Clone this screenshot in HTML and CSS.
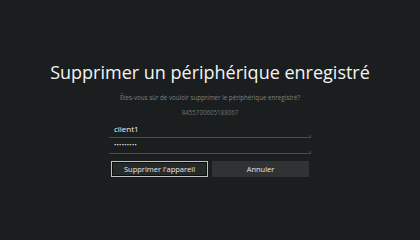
FILE: index.html
```html
<!DOCTYPE html>
<html lang="fr">
<head>
<meta charset="utf-8">
<title>Supprimer un périphérique enregistré</title>
<link rel="stylesheet" href="styles.css">
</head>
<body>
<main class="dialog">
  <h1 class="title">Supprimer un périphérique enregistré</h1>
  <p class="subtitle">Êtes-vous sûr de vouloir supprimer le périphérique enregistré?</p>
  <p class="serial">8455700605188067</p>
  <div class="form">
    <div class="field"><span class="value">client1</span></div>
    <div class="field"><span class="value dots">•••••••••</span></div>
    <div class="actions">
      <button class="btn btn-primary">Supprimer l'appareil</button>
      <button class="btn">Annuler</button>
    </div>
  </div>
</main>
</body>
</html>
```
FILE: styles.css
```css
html, body {
  margin: 0;
  padding: 0;
  background: #1b1e1e;
  height: 100%;
}
body {
  font-family: "Open Sans", "Noto Sans", sans-serif;
  color: #ffffff;
}
.dialog {
  display: flex;
  flex-direction: column;
  align-items: center;
  padding-top: 60px;
}
.title {
  margin: 0;
  font-size: 18px;
  line-height: 24px;
  font-weight: 400;
  color: #f4f4f4;
  white-space: nowrap;
}
.subtitle {
  margin: 9px 0 0;
  font-size: 6.2px;
  line-height: 10px;
  color: #7d8080;
}
.serial {
  margin: 5px 0 0;
  font-size: 6.2px;
  line-height: 10px;
  color: #6f7272;
}
.form {
  width: 202px;
  margin-top: 4px;
  display: flex;
  flex-direction: column;
}
.field {
  position: relative;
  height: 12px;
  border-bottom: 1px solid #4a4d4d;
  display: flex;
  align-items: flex-end;
  padding: 0 0 3px 5px;
}
.field::after {
  content: "";
  position: absolute;
  right: 0;
  bottom: 0;
  width: 1px;
  height: 2px;
  background: #4a4d4d;
}
.value {
  font-size: 8px;
  line-height: 10px;
  color: #f0f0f0;
}
.dots {
  font-size: 6px;
  letter-spacing: 0.3px;
}
.actions {
  display: flex;
  gap: 4px;
  margin: 7px 2px 0;
}
.btn {
  flex: 1;
  height: 16px;
  margin: 0;
  padding: 0;
  border: 1px solid transparent;
  background: #303333;
  color: #e6e6e6;
  font-family: "Open Sans", "Noto Sans", sans-serif;
  font-size: 7.5px;
  line-height: 12px;
}
.btn-primary {
  background: #262929;
  border-color: #bfc1c1;
  box-shadow: inset 0 0 0 1px #0e1010;
}
```
